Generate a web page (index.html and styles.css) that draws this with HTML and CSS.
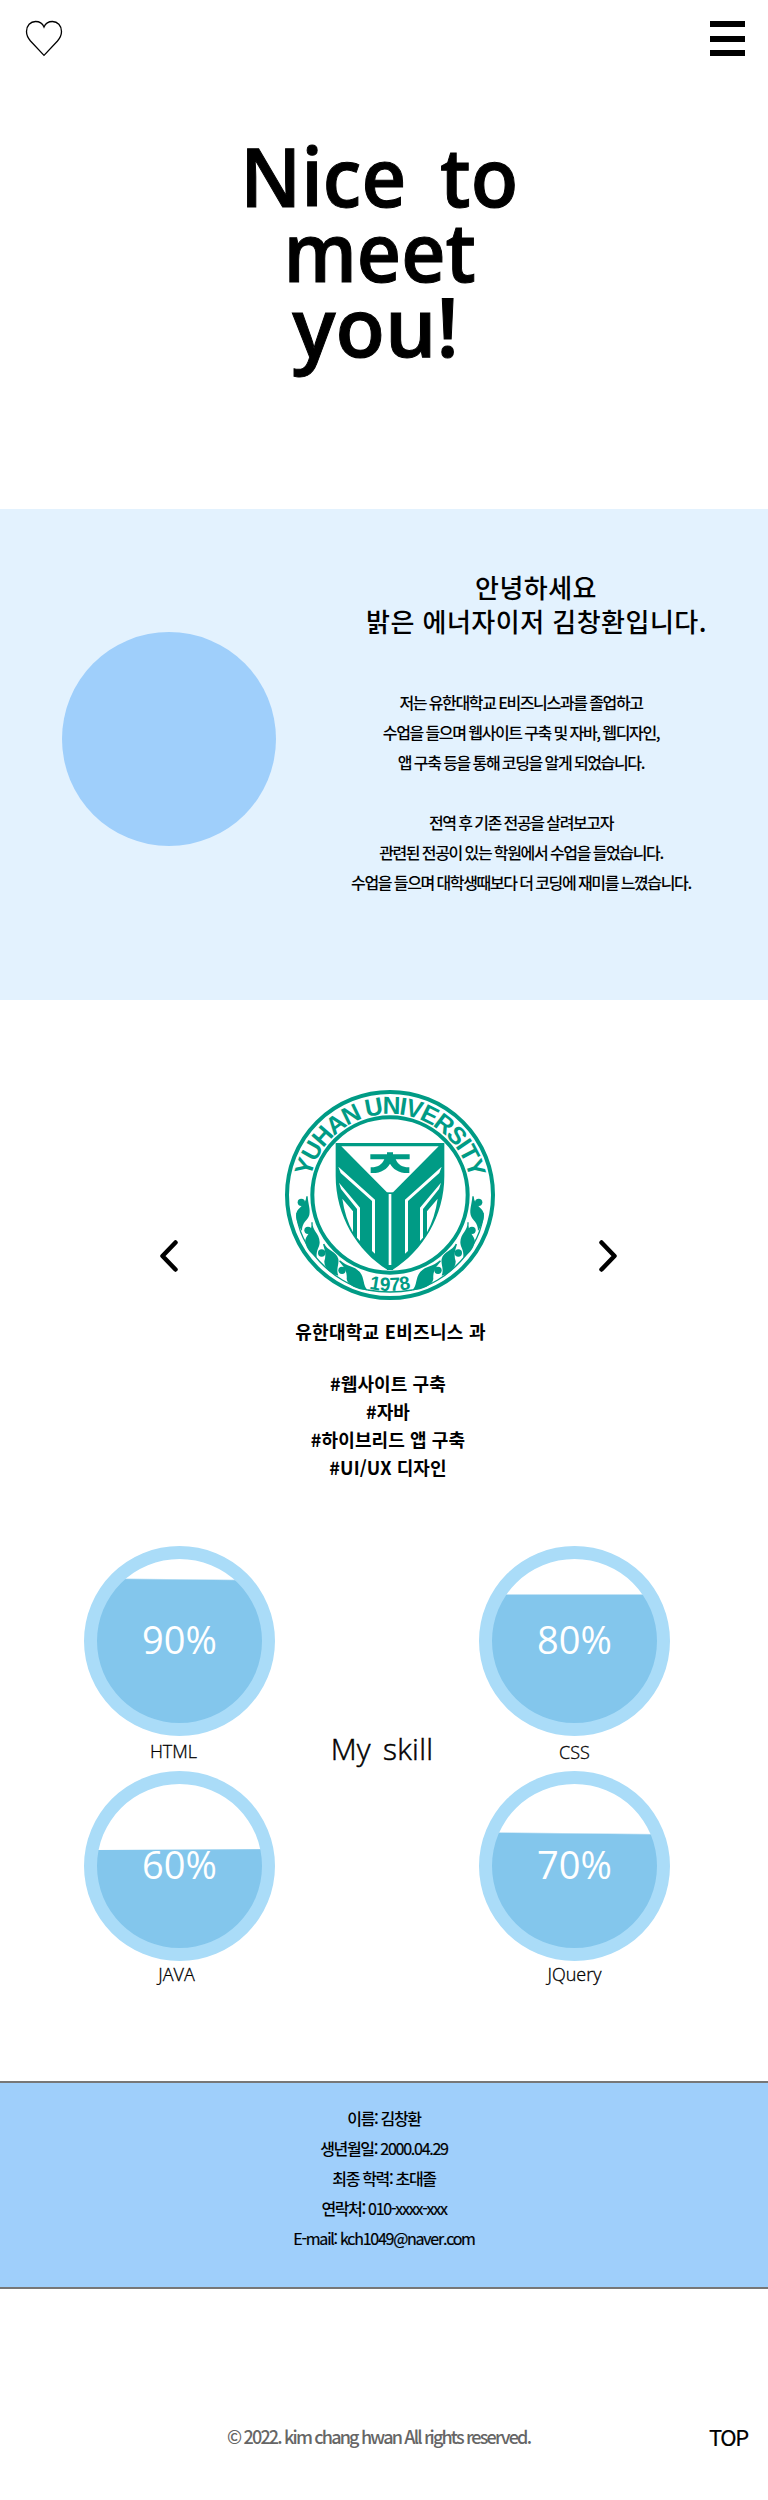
FILE: index.html
```html
<!DOCTYPE html>
<html lang="ko">
<head>
<meta charset="utf-8">
<title>Portfolio</title>
<link rel="stylesheet" href="styles.css">
</head>
<body>
<header class="top">
  <svg class="heart" viewBox="0 0 38 38"><path d="M19 35.400L5.500 21C2.500 17.500 1.500 14.500 1.500 11.500C1.500 5.500 5.500 1.500 10.500 1.500C14.500 1.500 17.500 3.500 19 7C20.500 3.500 23.500 1.500 27.500 1.500C32.500 1.500 36.500 5.500 36.500 11.500C36.500 14.500 35.500 17.500 32.500 21Z"/></svg>
  <div class="burger"><i></i><i></i><i></i></div>
</header>
<section class="hero"><h1><span class="l1">Nice to</span><span class="l2">meet</span><span class="l3">you!</span></h1></section>
<section class="intro">
  <div class="portrait"></div>
  <div class="about">
    <h2>안녕하세요<br>밝은 에너자이저 김창환입니다.</h2>
    <p>저는 유한대학교 E비즈니스과를 졸업하고<br>수업을 들으며 웹사이트 구축 및 자바, 웹디자인,<br>앱 구축 등을 통해 코딩을 알게 되었습니다.<br><br>전역 후 기존 전공을 살려보고자<br>관련된 전공이 있는 학원에서 수업을 들었습니다.<br>수업을 들으며 대학생때보다 더 코딩에 재미를 느꼈습니다.</p>
  </div>
</section>
<section class="slider">
  <svg class="arrow" viewBox="0 0 18 32"><path d="M15.500 2.500L2.500 16L15.500 29.500"/></svg>
  <div class="slide">
    <svg class="emblem" viewBox="44 43 630 630">
      <defs>
        <path id="arc" d="M121 305A244 244 0 0 1 597 305"/>
        <path id="year" d="M255 626A285 285 0 0 0 463 626"/>
        <g id="half">
          <circle cx="93" cy="380" r="11"/><circle cx="113" cy="464" r="11"/><circle cx="154" cy="532" r="11"/><circle cx="215" cy="584" r="11"/>
          <path d="M112 362C113 385 121 400 117 418C112 435 94 440 95 466C84 450 74 430 78 412C84 394 106 390 108 362Z"/>
          <path d="M127 440C124 465 147 472 148 500C148 515 137 522 139 546C118 532 104 512 105 493C110 475 126 470 123 440Z"/>
          <path d="M162 504C170 525 198 525 204 550C207 567 196 580 204 600C178 594 161 575 162 557C168 538 164 525 158 506Z"/>
          <path d="M209 554C230 574 252 570 269 590C283 607 277 630 292 643C260 643 231 628 229 610C231 588 222 574 206 557Z"/>
          <path class="vine" d="M80 412C80 510 190 625 292 643"/>
          <path d="M196 202H359V212H213L352 352V583C260 525 196 420 196 300Z"/>
          <path class="cut" d="M204 273L314 372V534L305 526V376L211 292Z M206 321L269 396V496L260 486V400L212 340Z M216 369L248 407V470Q224 425 216 369Z"/>
        </g>
      </defs>
      <circle class="ring" cx="359" cy="358" r="309"/><circle class="ring" cx="359" cy="358" r="233"/>
      <use href="#half"/><use href="#half" transform="translate(718 0) scale(-1 1)"/>
      <path d="M350 350H368V583H350Z"/>
      <path class="thin" d="M359 355V568"/>
      <path class="vine" d="M292 643Q359 655 426 643"/>
      <path d="M300 236H350V230H368V236H418V251H376C384 269 399 276 417 275V292C388 294 367 280 359 264C351 280 330 294 301 292V275C319 276 334 269 342 251H300Z"/>
      <text class="name"><textPath href="#arc" startOffset="1" textLength="660">YUHAN UNIVERSITY</textPath></text>
      <text class="yr"><textPath href="#year" startOffset="50%">1978</textPath></text>
    </svg>
    <h3>유한대학교 E비즈니스 과</h3>
    <p>#웹사이트 구축<br>#자바<br>#하이브리드 앱 구축<br>#UI/UX 디자인</p>
  </div>
  <svg class="arrow" viewBox="0 0 18 32"><path d="M2.500 2.500L15.500 16L2.500 29.500"/></svg>
</section>
<section class="skills">
  <div class="col">
    <div class="skill"><div class="gauge g90"><b>90%</b></div><span class="html">HTML</span></div>
    <div class="skill"><div class="gauge g60"><b>60%</b></div><span class="java">JAVA</span></div>
  </div>
  <h2>My skill</h2>
  <div class="col">
    <div class="skill"><div class="gauge g80"><b>80%</b></div><span class="css">CSS</span></div>
    <div class="skill"><div class="gauge g70"><b>70%</b></div><span class="jq">JQuery</span></div>
  </div>
</section>
<section class="contact">이름: 김창환<br>생년월일: <span class="latin">2000.04.29</span><br>최종 학력: 초대졸<br>연락처: <span class="latin">010-xxxx-xxx</span><br><span class="latin">E-mail: kch1049@naver.com</span></section>
<footer><p>© 2022. kim chang hwan All rights reserved.</p><a>TOP</a></footer>
</body>
</html>
```
FILE: styles.css
```css
* { box-sizing: border-box; margin: 0; padding: 0; }
body { width: 768px; height: 2500px; overflow-x: hidden; background: #fff; color: #000; font-family: "Noto Sans CJK KR", sans-serif; }
.top { height: 77px; padding: 20px 23px 0 25px; display: flex; justify-content: space-between; }
.heart { width: 38px; height: 38px; fill: none; stroke: #000; stroke-width: 1.3; }
.burger { width: 35px; height: 35px; margin-top: 1px; display: flex; flex-direction: column; justify-content: space-between; }
.burger i { height: 6px; background: #000; }
.hero { height: 432px; padding-top: 61px; }
.hero h1 { font: 600 81px/75px "Open Sans", sans-serif; text-align: center; }
.hero span { display: block; white-space: nowrap; -webkit-text-stroke: 1px #000; }
.l1 { word-spacing: 14px; padding-right: 10px; transform: scaleX(.96); }
.l2 { padding-right: 9px; transform: scaleX(.95); }
.l3 { padding-right: 17px; }
.intro { height: 491px; background: #e3f2fe; display: flex; }
.portrait { width: 214px; height: 214px; margin: 123px 0 0 62px; border-radius: 50%; background: #9fcffb; }
.about { flex: 1; text-align: center; white-space: nowrap; }
.about h2 { width: 340px; margin: 61px 0 0 90px; font-weight: 500; font-size: 26px; line-height: 34px; letter-spacing: .48px; }
.about p { width: 342px; margin: 49px 0 0 74px; font-weight: 500; font-size: 16px; line-height: 30px; letter-spacing: -1.360px; word-spacing: -.5px; }
.slider { height: 546px; padding: 90px 151px 0 160px; display: flex; justify-content: space-between; }
.arrow { width: 18px; height: 32px; margin-top: 150px; fill: none; stroke: #000; stroke-width: 4.5; stroke-linecap: round; stroke-linejoin: round; }
.slide { margin-left: 3px; text-align: center; white-space: nowrap; }
.emblem { display: block; width: 210px; height: 210px; margin: 0 auto; fill: #009b85; }
.ring { fill: none; stroke: #009b85; stroke-width: 12; }
.vine { fill: none; stroke: #009b85; stroke-width: 4; }
.cut { fill: #fff; }
.thin { stroke: #fff; stroke-width: 8; }
.name { font: bold 74px "Liberation Sans", sans-serif; }
.yr { font: bold 57px "Liberation Sans", sans-serif; text-anchor: middle; }
.slide h3 { margin-top: 17px; padding-left: 1px; font-size: 18px; line-height: 28px; font-weight: 700; letter-spacing: .3px; }
.slide p { margin-top: 24px; padding-right: 4px; font-size: 18px; line-height: 28px; font-weight: 700; letter-spacing: .1px; }
.skills { height: 535px; padding: 0 98px 0 84px; display: flex; justify-content: space-between; font-family: "Open Sans", sans-serif; }
.skill { width: 191px; height: 225px; text-align: center; font-weight: 300; font-size: 18px; line-height: 30px; -webkit-text-stroke: .3px currentColor; }
.skill span { display: block; }
.html { padding-right: 12px; }
.java { padding-right: 6px; line-height: 27px; }
.css { line-height: 32px; }
.jq { line-height: 26px; }
.skills h2 { margin-top: 182px; padding-left: 10px; font-size: 30px; line-height: 42px; font-weight: 300; letter-spacing: .3px; word-spacing: 4px; white-space: nowrap; -webkit-text-stroke: .5px #000; }
.gauge { height: 190px; border: 13px solid #aadcf8; border-radius: 50%; padding-top: 53px; }
.gauge b { display: block; color: #fff; font-size: 38px; line-height: 54px; font-weight: 400; -webkit-text-stroke: 0; }
.g90 { background: linear-gradient(180.600deg, #fff 20.500px, #83c6ec 22px); }
.g80 { background: linear-gradient(#fff 35px, #83c6ec 36px); }
.g60 { background: linear-gradient(179.700deg, #fff 65.500px, #83c6ec 66.500px); }
.g70 { background: linear-gradient(180.600deg, #fff 49.500px, #83c6ec 51px); }
.contact { height: 208px; padding-top: 20px; border-top: 2px solid #777; border-bottom: 2px solid #777; background: #9fcffb; text-align: center; font-weight: 500; font-size: 16px; line-height: 30px; letter-spacing: -1.350px; }
.latin { font-weight: 400; letter-spacing: -1.250px; -webkit-text-stroke: .2px #000; }
footer { height: 211px; padding: 127px 20px 0 227px; display: flex; justify-content: space-between; white-space: nowrap; line-height: 40px; }
footer p { color: #666; font-size: 18px; font-weight: 500; letter-spacing: -1.820px; }
footer a { font-size: 22px; letter-spacing: -1.300px; -webkit-text-stroke: .2px #000; }
```
